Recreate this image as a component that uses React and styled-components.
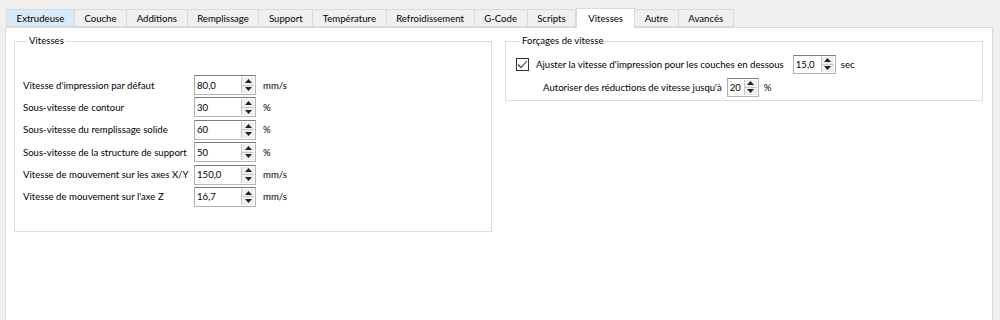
import React from "react";
import styled, { createGlobalStyle } from "styled-components";

const GlobalStyle = createGlobalStyle`
  body {
    margin: 0;
    background: #f0f0f0;
    font-family: Lato, "Liberation Sans", Arial, sans-serif;
    font-size: 9.6px;
    color: #000;
  }
`;

const tabs = [
  "Extrudeuse",
  "Couche",
  "Additions",
  "Remplissage",
  "Support",
  "Température",
  "Refroidissement",
  "G-Code",
  "Scripts",
  "Vitesses",
  "Autre",
  "Avancés",
];

const speeds = [
  { label: "Vitesse d'impression par défaut", value: "80,0", unit: "mm/s" },
  { label: "Sous-vitesse de contour", value: "30", unit: "%" },
  { label: "Sous-vitesse du remplissage solide", value: "60", unit: "%" },
  { label: "Sous-vitesse de la structure de support", value: "50", unit: "%" },
  { label: "Vitesse de mouvement sur les axes X/Y", value: "150,0", unit: "mm/s" },
  { label: "Vitesse de mouvement sur l'axe Z", value: "16,7", unit: "mm/s" },
];

function SpinBox({ value, width, height }) {
  return (
    <Spin $width={width} $height={height}>
      <SpinValue>{value}</SpinValue>
      <Arrows>
        <Arrow>
          <svg width="7" height="4" viewBox="0 0 7 4">
            <path d="M0 4 L3.5 0 L7 4 Z" fill="#222" />
          </svg>
        </Arrow>
        <Arrow>
          <svg width="7" height="4" viewBox="0 0 7 4">
            <path d="M0 0 L3.5 4 L7 0 Z" fill="#222" />
          </svg>
        </Arrow>
      </Arrows>
    </Spin>
  );
}

function App() {
  return (
    <Window>
      <GlobalStyle />
      <TabBar>
        {tabs.map((t, i) => (
          <Tab key={t} $active={t === "Vitesses"} $hover={i === 0}>
            {t}
          </Tab>
        ))}
      </TabBar>
      <Pane>
        <Group>
          <Legend>Vitesses</Legend>
          <SpeedGrid>
            {speeds.map((s) => (
              <React.Fragment key={s.label}>
                <Label>{s.label}</Label>
                <SpinBox value={s.value} width={62} height={20} />
                <Label>{s.unit}</Label>
              </React.Fragment>
            ))}
          </SpeedGrid>
        </Group>
        <Group $short>
          <Legend>Forçages de vitesse</Legend>
          <OverrideRow>
            <Check>
              <svg width="11" height="9" viewBox="0 0 11 9">
                <path d="M1 4.5 L4 7.5 L10 1" fill="none" stroke="#333" strokeWidth="1.1" />
              </svg>
            </Check>
            <Label>Ajuster la vitesse d'impression pour les couches en dessous</Label>
            <Gap />
            <SpinBox value="15,0" width={43} height={19} />
            <Label>sec</Label>
          </OverrideRow>
          <OverrideRow $indent>
            <Label>Autoriser des réductions de vitesse jusqu'à</Label>
            <SpinBox value="20" width={32} height={19} />
            <Label>%</Label>
          </OverrideRow>
        </Group>
      </Pane>
    </Window>
  );
}

export default App;

const Window = styled.div`
  padding: 8px 7px 0 5px;
  height: 320px;
  box-sizing: border-box;
  overflow: hidden;
`;

const TabBar = styled.div`
  display: flex;
  align-items: flex-end;
  padding-left: 1px;
  height: 19px;
`;

const Tab = styled.div`
  box-sizing: border-box;
  height: ${(p) => (p.$active ? "20px" : "18px")};
  padding: 0 ${(p) => (p.$active ? "11px" : "9.6px")};
  display: flex;
  align-items: center;
  justify-content: center;
  white-space: nowrap;
  border: 1px solid #d9d9d9;
  border-bottom: ${(p) => (p.$active ? "none" : "1px solid #d9d9d9")};
  border-left: ${(p) => (p.$active ? "1px solid #d9d9d9" : "none")};
  background: ${(p) => (p.$active ? "#fff" : p.$hover ? "#d8e9f8" : "#f0f0f0")};
  margin-bottom: ${(p) => (p.$active ? "-1px" : "0")};
  position: relative;
  z-index: ${(p) => (p.$active ? 1 : 0)};
  padding-top: ${(p) => (p.$active ? "0" : "1px")};
  &:first-child {
    border-left: 1px solid #d9d9d9;
  }
`;

const Pane = styled.div`
  border: 1px solid #d9d9d9;
  background: #fff;
  height: 320px;
  box-sizing: border-box;
  display: grid;
  grid-template-columns: 1fr 1fr;
  column-gap: 13px;
  align-items: start;
  padding: 6px 9px 0 8px;
`;

const Group = styled.fieldset`
  margin: 0;
  border: 1px solid #dcdcdc;
  padding: ${(p) => (p.$short ? "6px 10px 3px 10px" : "27px 8px 24px 8px")};
  min-width: 0;
  box-sizing: border-box;
`;

const Legend = styled.legend`
  padding: 0 2px;
  margin-left: 4px;
  line-height: 14px;
`;

const Label = styled.span`
  white-space: nowrap;
`;

const SpeedGrid = styled.div`
  display: grid;
  grid-template-columns: 165px 62px auto;
  column-gap: 6px;
  row-gap: 2.4px;
  align-items: center;
  & > span:nth-child(3n) {
    padding-left: 1px;
  }
`;

const Spin = styled.div`
  box-sizing: border-box;
  width: ${(p) => p.$width}px;
  height: ${(p) => p.$height}px;
  border: 1px solid #7a7a7a;
  border-color: #7a7a7a #b5b5b5 #b5b5b5 #adadad;
  background: #fff;
  display: flex;
  flex-shrink: 0;
`;

const SpinValue = styled.span`
  flex: 1;
  padding-left: 2px;
  display: flex;
  align-items: center;
  white-space: nowrap;
`;

const Arrows = styled.div`
  width: 12px;
  display: flex;
  flex-direction: column;
  border-left: 1px solid #c8c8c8;
  background: #f0f0f0;
  margin: 1px;
`;

const Arrow = styled.div`
  flex: 1;
  display: flex;
  align-items: center;
  justify-content: center;
  & + & {
    border-top: 1px solid #c8c8c8;
  }
`;

const OverrideRow = styled.div`
  display: flex;
  align-items: center;
  gap: 5px;
  height: 20px;
  padding-left: ${(p) => (p.$indent ? "27px" : "0")};
  margin-top: ${(p) => (p.$indent ? "3px" : "0")};
`;

const Check = styled.span`
  box-sizing: border-box;
  width: 13px;
  height: 13px;
  border: 1px solid #333;
  background: #fff;
  display: flex;
  align-items: center;
  justify-content: center;
  margin-right: 2px;
`;

const Gap = styled.span`
  width: 0;
  margin-left: -1px;
`;
